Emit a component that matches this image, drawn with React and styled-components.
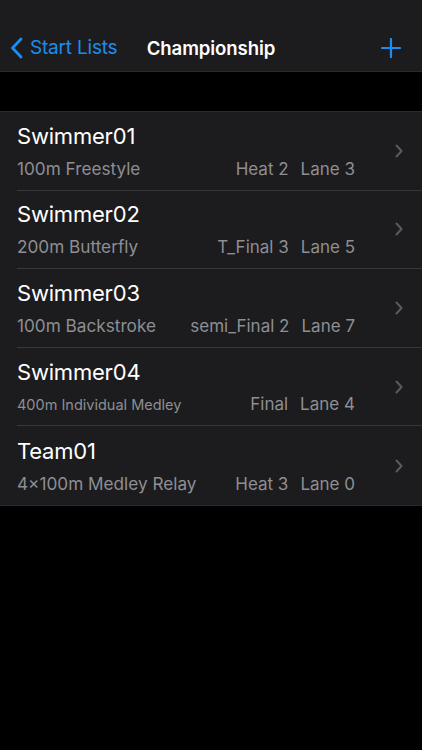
import React from "react";
import styled, { createGlobalStyle } from "styled-components";

const GlobalStyle = createGlobalStyle`
  html, body {
    margin: 0;
    padding: 0;
    background: #000;
    font-family: Inter, "Noto Sans", "Liberation Sans", sans-serif;
    -webkit-font-smoothing: antialiased;
  }
`;

const Screen = styled.div`
  width: 422px;
  min-height: 750px;
  background: #000;
  display: flex;
  flex-direction: column;
`;

const NavBar = styled.header`
  height: 72px;
  background: #1c1c1e;
  display: grid;
  grid-template-columns: 1fr auto 1fr;
  align-items: center;
  padding: 24px 21px 0 21px;
  box-sizing: border-box;
  border-bottom: 1px solid #2a2a2c;
`;

const BackButton = styled.div`
  display: flex;
  align-items: center;
  gap: 7px;
  margin-left: -11px;
  color: #1d8cf0;
  font-size: 19px;
  letter-spacing: -0.2px;
`;

const Title = styled.h1`
  margin: 0;
  color: #fff;
  font-size: 18.6px;
  font-weight: 600;
  letter-spacing: -0.1px;
`;

const AddButton = styled.div`
  justify-self: end;
  display: flex;
  align-items: center;
`;

const Gap = styled.div`
  height: 39px;
`;

const List = styled.ul`
  list-style: none;
  margin: 0;
  padding: 0;
  background: #1c1c1e;
  border-top: 1px solid #2a2a2c;
  border-bottom: 1px solid #2a2a2c;
`;

const Row = styled.li`
  display: flex;
  align-items: center;
  padding-left: 17px;
  height: 78.6px;
  box-sizing: border-box;
`;

const RowInner = styled.div`
  flex: 1;
  height: 100%;
  display: flex;
  align-items: center;
  padding-right: 19px;
  border-bottom: ${(p) => (p.$last ? "none" : "1px solid #38383a")};
  box-sizing: border-box;
`;

const Info = styled.div`
  flex: 1;
  display: flex;
  flex-direction: column;
  gap: 9px;
  padding-right: 40px;
`;

const Name = styled.div`
  color: #fff;
  font-size: 22px;
  letter-spacing: -0.2px;
`;

const SubLine = styled.div`
  display: flex;
  justify-content: space-between;
  align-items: baseline;
  color: #8e8e93;
  font-size: 17px;
`;

const Event = styled.span`
  font-size: ${(p) => (p.$small ? "14.5px" : "17.2px")};
`;

const Slot = styled.span`
  display: flex;
  gap: 12px;
`;

const ChevronLeft = () => (
  <svg width="13" height="22" viewBox="0 0 13 22" fill="none">
    <path d="M11 2 L2.5 11 L11 20" stroke="#1d8cf0" strokeWidth="2.8" strokeLinecap="round" strokeLinejoin="round" />
  </svg>
);

const Plus = () => (
  <svg width="20" height="20" viewBox="0 0 20 20">
    <path d="M10 1 V19 M1 10 H19" stroke="#1d8cf0" strokeWidth="2.2" strokeLinecap="round" />
  </svg>
);

const ChevronRight = () => (
  <svg width="8" height="14" viewBox="0 0 8 14" fill="none">
    <path d="M1.5 1.5 L6.5 7 L1.5 12.5" stroke="#5a5a5e" strokeWidth="2" strokeLinecap="round" strokeLinejoin="round" />
  </svg>
);

const entries = [
  { name: "Swimmer01", event: "100m Freestyle", round: "Heat 2", lane: "Lane 3" },
  { name: "Swimmer02", event: "200m Butterfly", round: "T_Final 3", lane: "Lane 5" },
  { name: "Swimmer03", event: "100m Backstroke", round: "semi_Final 2", lane: "Lane 7" },
  { name: "Swimmer04", event: "400m Individual Medley", round: "Final", lane: "Lane 4", small: true },
  { name: "Team01", event: "4×100m Medley Relay", round: "Heat 3", lane: "Lane 0" },
];

export default function App() {
  return (
    <Screen>
      <GlobalStyle />
      <NavBar>
        <BackButton>
          <ChevronLeft />
          Start Lists
        </BackButton>
        <Title>Championship</Title>
        <AddButton>
          <Plus />
        </AddButton>
      </NavBar>
      <Gap />
      <List>
        {entries.map((e, i) => (
          <Row key={e.name}>
            <RowInner $last={i === entries.length - 1}>
              <Info>
                <Name>{e.name}</Name>
                <SubLine>
                  <Event $small={e.small}>{e.event}</Event>
                  <Slot>
                    <span>{e.round}</span>
                    <span>{e.lane}</span>
                  </Slot>
                </SubLine>
              </Info>
              <ChevronRight />
            </RowInner>
          </Row>
        ))}
      </List>
    </Screen>
  );
}
